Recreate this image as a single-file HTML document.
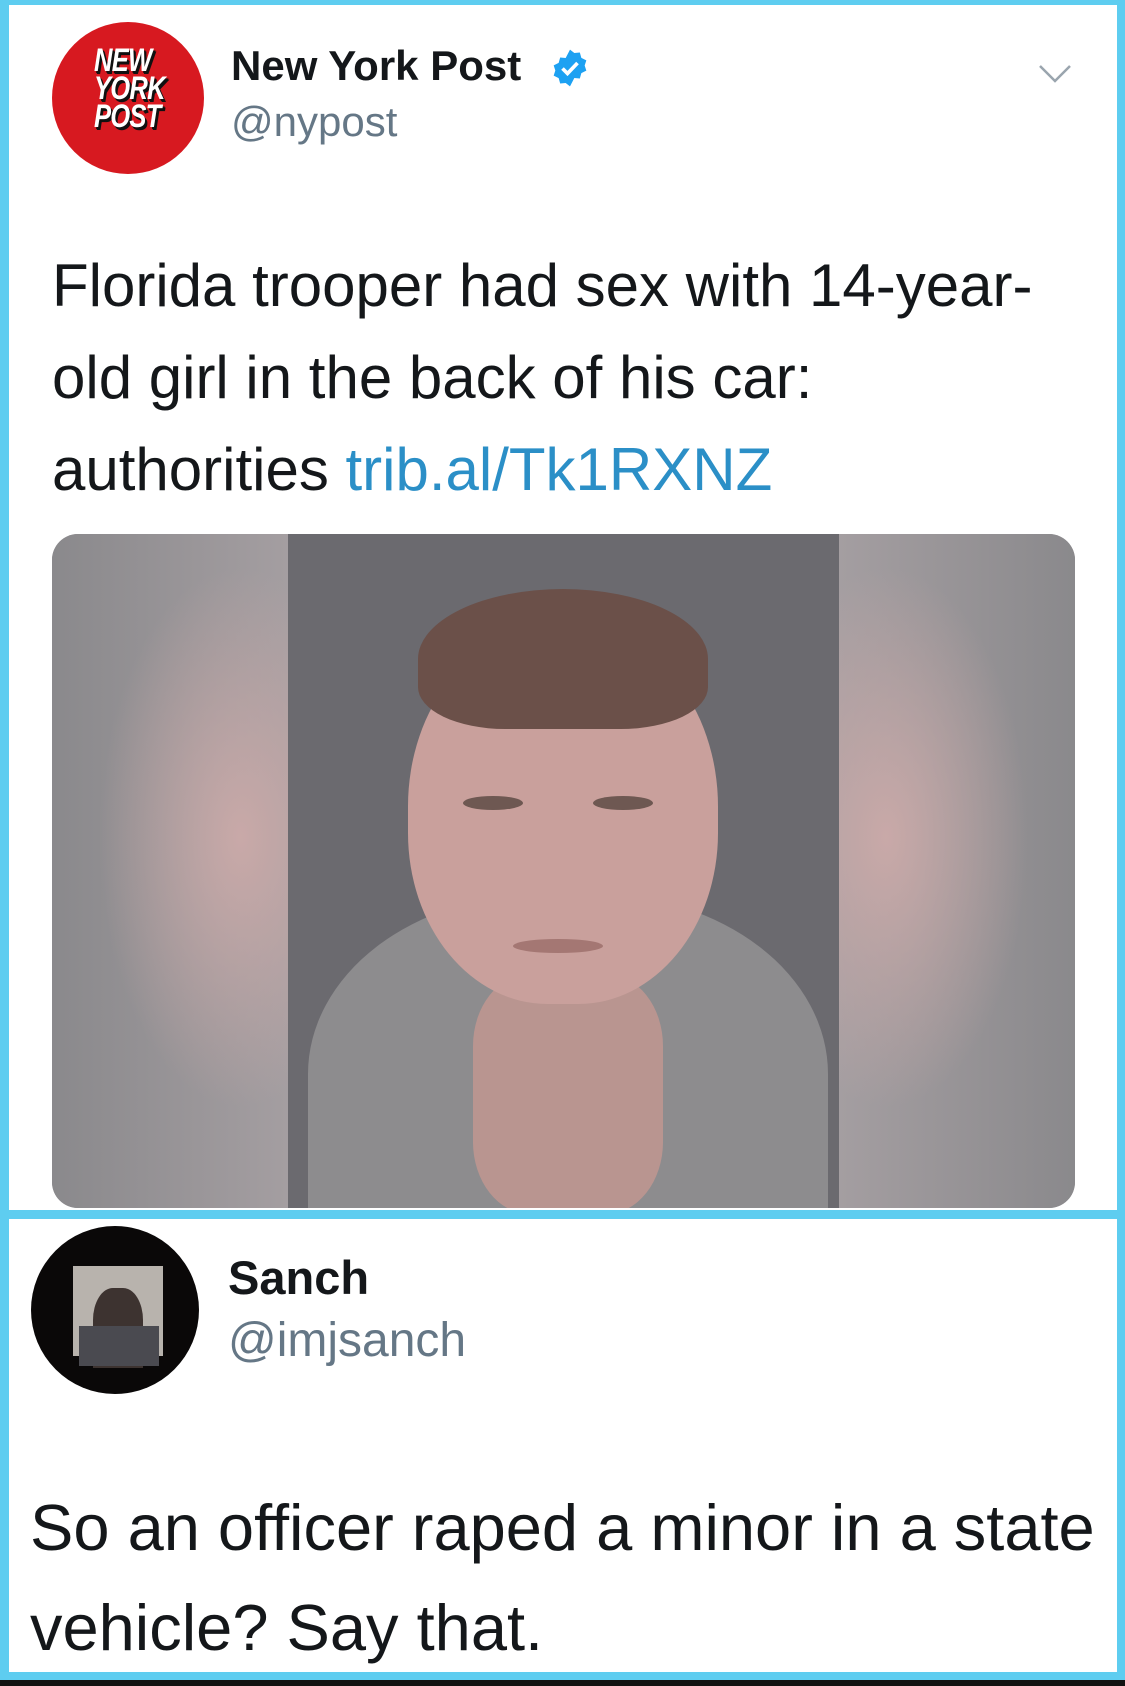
<!DOCTYPE html>
<html><head><meta charset="utf-8"><style>
*{margin:0;padding:0;box-sizing:border-box}
body{width:1125px;height:1686px;background:#5ecdf0;position:relative;overflow:hidden;font-family:"Liberation Sans",sans-serif}
.card{position:absolute;background:#fff}
.t{position:absolute;white-space:nowrap}
</style></head><body>
<div class="card" style="left:9px;top:5px;width:1108px;height:1205px"></div>
<div class="card" style="left:9px;top:1219px;width:1108px;height:453px"></div>
<div style="position:absolute;left:0;top:1680px;width:1125px;height:6px;background:#111"></div>

<!-- NYP logo -->
<div style="position:absolute;left:52px;top:22px;width:152px;height:152px;border-radius:50%;background:#d71920"></div>
<div class="t" style="left:94px;top:46px;color:#fff;font:italic bold 32px/28px 'Liberation Sans',sans-serif;transform:scaleX(0.8);transform-origin:left;text-shadow:2px 2px 0 #111,3px 3px 0 #111;letter-spacing:-1px">NEW<br>YORK<br>POST</div>

<div class="t" style="left:231px;top:42px;font-weight:bold;font-size:42px;color:#14171a">New York Post</div>
<svg style="position:absolute;left:550px;top:48px" width="40" height="40" viewBox="0 0 24 24"><path fill="#1da1f2" d="M12 1l2.6 2 3.3-.3.9 3.2 3 1.5-1 3.1 1 3.1-3 1.5-.9 3.2-3.3-.3L12 23l-2.6-2-3.3.3-.9-3.2-3-1.5 1-3.1-1-3.1 3-1.5.9-3.2 3.3.3z"/><path d="M7.5 12.3l3 3 6-6.3" stroke="#fff" stroke-width="2.2" fill="none"/></svg>
<div class="t" style="left:231px;top:98px;font-size:42px;color:#657786">@nypost</div>
<svg style="position:absolute;left:1038px;top:64px" width="34" height="20" viewBox="0 0 34 20"><path d="M2 2l15 15L32 2" stroke="#9aa5ae" stroke-width="2.5" fill="none"/></svg>

<div class="t" style="left:52px;top:240px;font-size:60px;line-height:92px;color:#14171a">Florida trooper had sex with 14-year-<br>old girl in the back of his car:<br>authorities <span style="color:#2b8fc7">trib.al/Tk1RXNZ</span></div>

<!-- photo -->
<div style="position:absolute;left:52px;top:534px;width:1023px;height:674px;border-radius:26px;overflow:hidden;background:linear-gradient(90deg,#8c8a8e,#a8a0a3 20%,#8f8c90)">
 <div style="position:absolute;left:0;top:0;width:236px;height:674px;background:radial-gradient(ellipse 60% 40% at 80% 45%,#c9a9a8,transparent),linear-gradient(90deg,#8a898c,#a49ea1)"></div>
 <div style="position:absolute;right:0;top:0;width:236px;height:674px;background:radial-gradient(ellipse 60% 40% at 20% 45%,#c9a9a8,transparent),linear-gradient(90deg,#a49ea1,#8a898c)"></div>
 <div style="position:absolute;left:236px;top:0;width:551px;height:674px;background:#6b6a6f;overflow:hidden">
  <div style="position:absolute;left:20px;top:360px;width:520px;height:400px;border-radius:45% 45% 0 0;background:#8d8c8e"></div>
  <div style="position:absolute;left:185px;top:440px;width:190px;height:240px;background:#b99590;border-radius:30%"></div>
  <div style="position:absolute;left:120px;top:90px;width:310px;height:380px;border-radius:48% 48% 45% 45%;background:#c9a09c"></div>
  <div style="position:absolute;left:130px;top:55px;width:290px;height:140px;border-radius:50% 50% 30% 30%;background:#6b5049"></div>
  <div style="position:absolute;left:175px;top:262px;width:60px;height:14px;border-radius:50%;background:#6e5852"></div>
  <div style="position:absolute;left:305px;top:262px;width:60px;height:14px;border-radius:50%;background:#6e5852"></div>
  <div style="position:absolute;left:225px;top:405px;width:90px;height:14px;border-radius:50%;background:#a47773"></div>
 </div>
</div>

<!-- Sanch -->
<div style="position:absolute;left:31px;top:1226px;width:168px;height:168px;border-radius:50%;background:#0a0808;overflow:hidden">
 <div style="position:absolute;left:42px;top:40px;width:90px;height:90px;background:#b8b3ad"></div>
 <div style="position:absolute;left:62px;top:62px;width:50px;height:80px;border-radius:40% 40% 0 0;background:#3d3330"></div>
 <div style="position:absolute;left:48px;top:100px;width:80px;height:40px;background:#4a4a50"></div>
</div>
<div class="t" style="left:228px;top:1250px;font-weight:bold;font-size:47px;color:#14171a">Sanch</div>
<div class="t" style="left:228px;top:1313px;font-size:48px;color:#657786">@imjsanch</div>
<div class="t" style="left:30px;top:1478px;font-size:65px;line-height:100px;color:#14171a">So an officer raped a minor in a state<br>vehicle? Say that.</div>
</body></html>
